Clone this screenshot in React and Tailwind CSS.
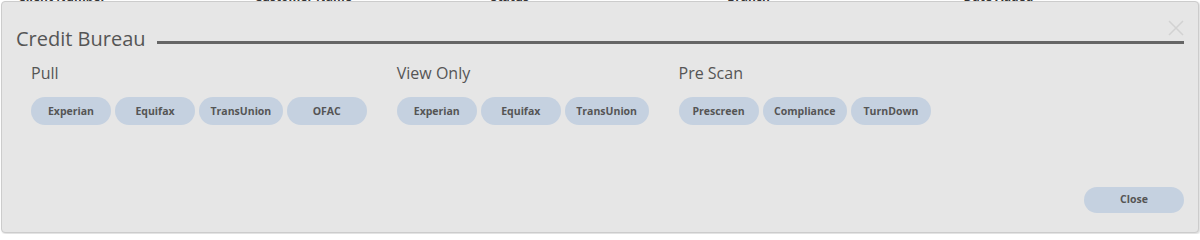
import React from "react";

const font = { fontFamily: '"Open Sans", "Noto Sans", sans-serif' };

function Pill({ children }) {
  return (
    <button className="h-[28px] min-w-[80px] px-[11.5px] rounded-full bg-[#c5d1e0] text-[10.5px] font-bold text-[#555555] leading-none">
      {children}
    </button>
  );
}

function Group({ label, items }) {
  return (
    <div className="flex flex-col">
      <div className="text-[16px] leading-[22px] text-[#555555]">{label}</div>
      <div className="mt-[13px] flex gap-[4px]">
        {items.map((i) => (
          <Pill key={i}>{i}</Pill>
        ))}
      </div>
    </div>
  );
}

export default function App() {
  return (
    <div className="relative h-[234px] w-[1200px] overflow-hidden bg-white" style={font}>
      <div className="grid grid-cols-5 pl-[18px] mt-[-12px] text-[12px] font-bold text-[#333333]">
        <div>Client Number</div>
        <div>Customer Name</div>
        <div>Status</div>
        <div>Branch</div>
        <div>Date Added</div>
      </div>
      <div className="absolute left-[1px] top-[1px] w-[1198px] h-[232px] rounded-[4px] border border-[#cccccc] bg-[#e6e6e6] shadow-[1px_1px_2px_rgba(0,0,0,0.15)] flex flex-col px-[14px]">
        <span className="absolute right-[14px] top-[18px] text-[#d2d2d2]">
          <svg width="16" height="16" viewBox="0 0 16 16" fill="none" stroke="currentColor" strokeWidth="1.5">
            <path d="M1 1L15 15M15 1L1 15" />
          </svg>
        </span>
        <div className="flex items-end mt-[23px]">
          <div className="text-[20px] leading-[27px] text-[#555555]">Credit Bureau</div>
          <div className="ml-[11px] flex-1 h-[3px] bg-[#666666] mb-[8px]" />
        </div>
        <div className="mt-[10px] pl-[15px] flex gap-[30px]">
          <Group label="Pull" items={["Experian", "Equifax", "TransUnion", "OFAC"]} />
          <Group label="View Only" items={["Experian", "Equifax", "TransUnion"]} />
          <Group label="Pre Scan" items={["Prescreen", "Compliance", "TurnDown"]} />
        </div>
        <div className="flex-1" />
        <div className="flex justify-end mb-[19px]">
          <button className="h-[26px] w-[100px] rounded-full bg-[#c5d1e0] text-[10.5px] font-bold text-[#555555]">
            Close
          </button>
        </div>
      </div>
    </div>
  );
}
